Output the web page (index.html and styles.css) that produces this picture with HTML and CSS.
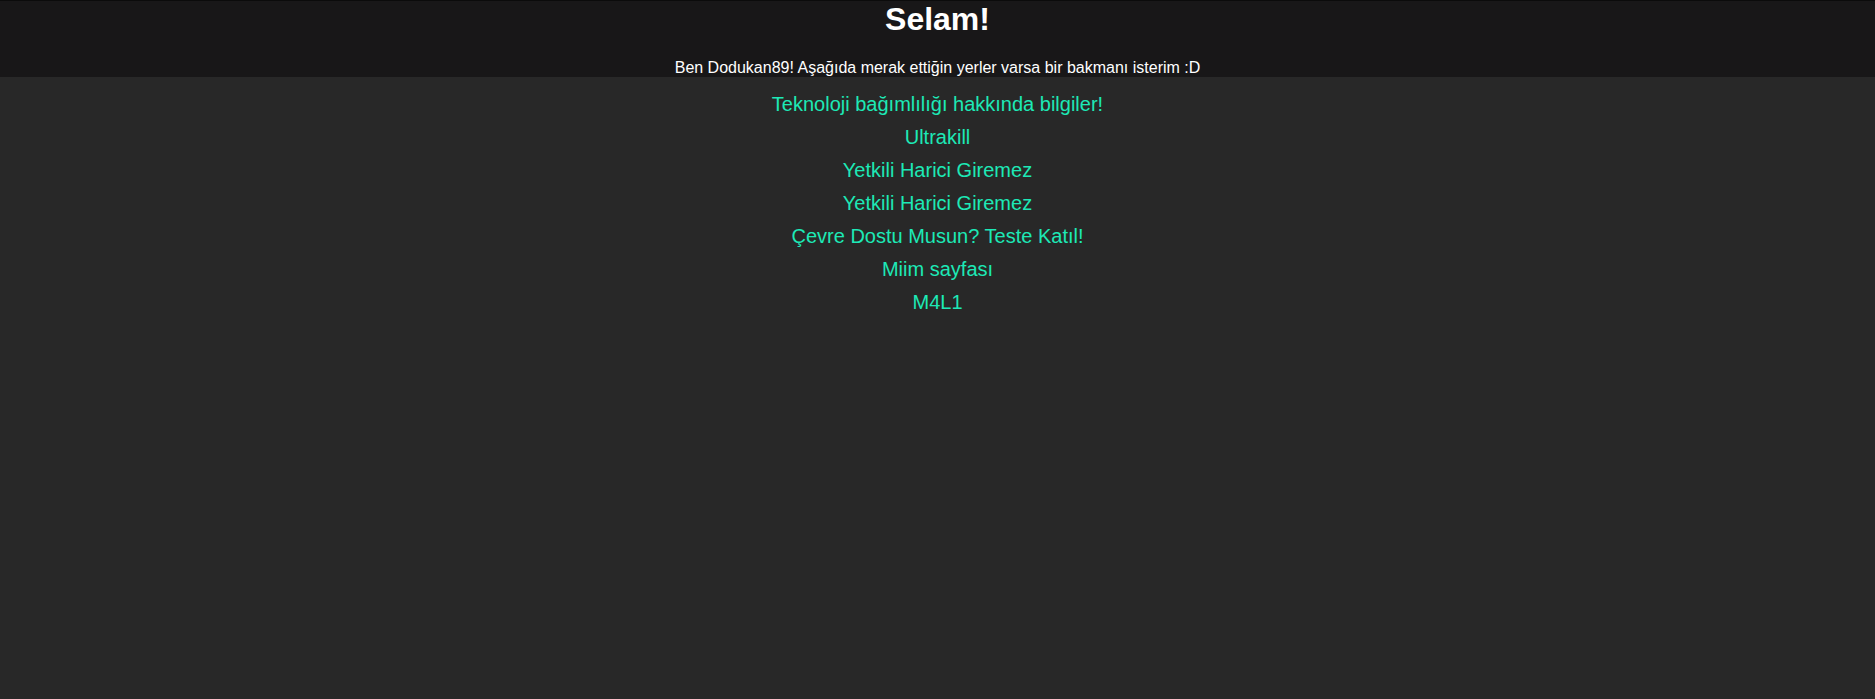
FILE: index.html
```html
<!DOCTYPE html>
<html lang="tr">
<head>
<meta charset="utf-8">
<title>Selam!</title>
<link rel="stylesheet" href="styles.css">
</head>
<body>
<header class="top">
  <h1 class="title">Selam!</h1>
  <p class="intro">Ben Dodukan89! Aşağıda merak ettiğin yerler varsa bir bakmanı isterim :D</p>
</header>
<nav class="links">
  <a class="link" href="#">Teknoloji bağımlılığı hakkında bilgiler!</a>
  <a class="link" href="#">Ultrakill</a>
  <a class="link" href="#">Yetkili Harici Giremez</a>
  <a class="link" href="#">Yetkili Harici Giremez</a>
  <a class="link" href="#">Çevre Dostu Musun? Teste Katıl!</a>
  <a class="link" href="#">Miim sayfası</a>
  <a class="link" href="#">M4L1</a>
</nav>
</body>
</html>
```

FILE: styles.css
```css
html, body {
  margin: 0;
  padding: 0;
}
body {
  background: #282828;
  font-family: "Liberation Sans", Arial, sans-serif;
  color: #ffffff;
  min-height: 699px;
}
.top {
  background: #181718;
  border-top: 1px solid #0b0b0b;
  text-align: center;
}
.title {
  margin: 0 0 21px;
  font-size: 32px;
  font-weight: bold;
  color: #ffffff;
}
.intro {
  margin: 0;
  font-size: 16px;
  color: #ffffff;
}
.links {
  display: flex;
  flex-direction: column;
  align-items: center;
  gap: 10px;
  padding-top: 16px;
}
.link {
  font-size: 20px;
  color: #1de9b6;
  text-decoration: none;
}
```
